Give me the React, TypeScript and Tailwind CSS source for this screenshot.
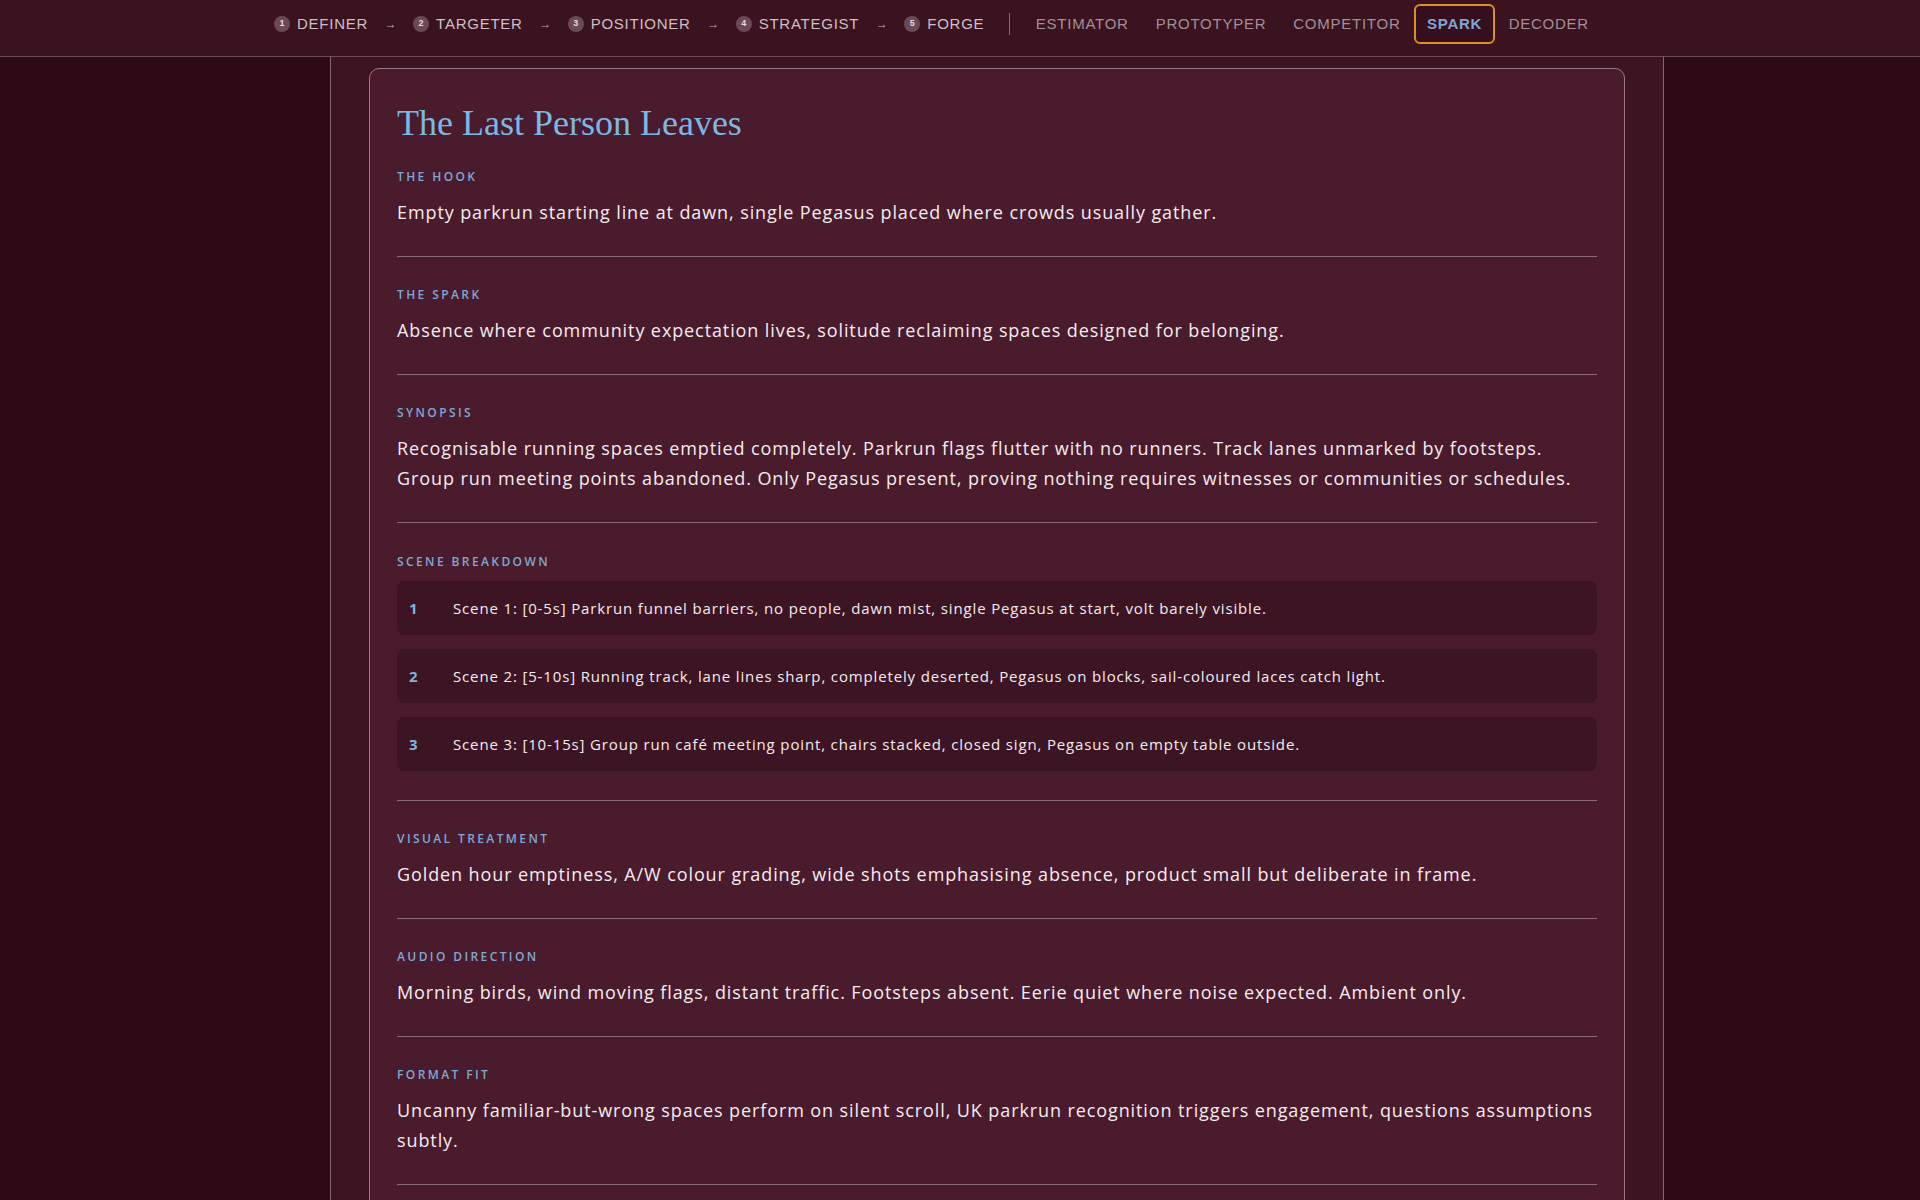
import React from "react";

const steps = [
  { n: "1", label: "DEFINER" },
  { n: "2", label: "TARGETER" },
  { n: "3", label: "POSITIONER" },
  { n: "4", label: "STRATEGIST" },
  { n: "5", label: "FORGE" },
];

const tools = ["ESTIMATOR", "PROTOTYPER", "COMPETITOR", "SPARK", "DECODER"];

const scenes = [
  "Scene 1: [0-5s] Parkrun funnel barriers, no people, dawn mist, single Pegasus at start, volt barely visible.",
  "Scene 2: [5-10s] Running track, lane lines sharp, completely deserted, Pegasus on blocks, sail-coloured laces catch light.",
  "Scene 3: [10-15s] Group run café meeting point, chairs stacked, closed sign, Pegasus on empty table outside.",
];

const bodyFont = { fontFamily: '"Open Sans", "Noto Sans", sans-serif' };

function Label({ children }: { children: React.ReactNode }) {
  return (
    <div className="text-[12px] leading-[16px] font-semibold tracking-[0.2em] text-[#7fa8d2]">
      {children}
    </div>
  );
}

function Section({
  label,
  children,
  first,
}: {
  label: string;
  children: React.ReactNode;
  first?: boolean;
}) {
  return (
    <div
      className={`${first ? "pt-0" : "pt-[30px]"} pb-[29px] border-b border-[#8d6a7a]`}
    >
      <Label>{label}</Label>
      <div className="mt-[12px]">{children}</div>
    </div>
  );
}

function Text({ children }: { children: React.ReactNode }) {
  return (
    <p className="text-[18px] leading-[30px] tracking-[0.9px] text-[#f5ecef]">{children}</p>
  );
}

export default function App() {
  return (
    <div className="min-h-screen w-full bg-[#2d0a15] flex flex-col" style={bodyFont}>
      {/* Nav */}
      <nav
        className="h-[57px] shrink-0 bg-[#3b1320] border-b border-[#6f4b5a] flex items-start pt-[4px]"
        style={{ fontFamily: '"Liberation Sans", Arial, sans-serif' }}
      >
        <div className="ml-[274px] flex items-center h-[40px]">
          {steps.map((s, i) => (
            <React.Fragment key={s.n}>
              <div className="flex items-center gap-[7px]">
                <span className="w-[16px] h-[16px] rounded-full bg-[#6a4a56] text-[#e6d8dc] text-[9px] font-bold flex items-center justify-center">
                  {s.n}
                </span>
                <span className="text-[15px] tracking-[0.05em] text-[#cdbfc4]">
                  {s.label}
                </span>
              </div>
              {i < steps.length - 1 && (
                <span className="mx-[16.5px] text-[12px] text-[#bfaeb4]">→</span>
              )}
            </React.Fragment>
          ))}
          <span className="ml-[25px] mr-[12px] w-px h-[22px] bg-[#8a6a76]" />
          {tools.map((t) =>
            t === "SPARK" ? (
              <span
                key={t}
                className="h-[40px] px-[11px] flex items-center rounded-[6px] border-2 border-[#d9921c] bg-[#35101c] text-[15px] font-bold tracking-[0.05em] text-[#7fa6d0]"
              >
                {t}
              </span>
            ) : (
              <span
                key={t}
                className="h-[40px] px-[11.5px] flex items-center border-2 border-transparent text-[15px] tracking-[0.05em] text-[#a38f97]"
              >
                {t}
              </span>
            )
          )}
        </div>
      </nav>

      {/* Body */}
      <div className="flex-1 flex">
        <div className="ml-[330px] w-[1334px] bg-[#3d1422] border-x border-[#8a6575] px-[38px] pt-[11px]">
          <div className="bg-[#4a1b2d] border border-[#9c7887] rounded-[10px] px-[27px] pt-[32px] pb-[28px]">
            <h1
              className="text-[36px] leading-[44px] text-[#7cb9e2] mb-[24px]"
              style={{ fontFamily: '"Liberation Serif", "Times New Roman", serif' }}
            >
              The Last Person Leaves
            </h1>

            <Section label="THE HOOK" first>
              <Text>
                Empty parkrun starting line at dawn, single Pegasus placed where crowds usually gather.
              </Text>
            </Section>

            <Section label="THE SPARK">
              <Text>
                Absence where community expectation lives, solitude reclaiming spaces designed for belonging.
              </Text>
            </Section>

            <Section label="SYNOPSIS">
              <Text>
                Recognisable running spaces emptied completely. Parkrun flags flutter with no runners. Track lanes unmarked by footsteps. Group run meeting points abandoned. Only Pegasus present, proving nothing requires witnesses or communities or schedules.
              </Text>
            </Section>

            <div className="pt-[31px] pb-[29px] border-b border-[#8d6a7a]">
              <Label>SCENE BREAKDOWN</Label>
              <div className="mt-[11px] flex flex-col gap-[14px]">
                {scenes.map((s, i) => (
                  <div
                    key={i}
                    className="h-[54px] rounded-[8px] bg-[#3c1423] flex items-center pl-[12px] pr-4"
                  >
                    <span className="w-[44px] shrink-0 text-[15px] font-bold text-[#7fb3e0]">
                      {i + 1}
                    </span>
                    <span className="text-[15px] leading-[22px] tracking-[0.85px] text-[#f5ecef]">{s}</span>
                  </div>
                ))}
              </div>
            </div>

            <Section label="VISUAL TREATMENT">
              <Text>
                Golden hour emptiness, A/W colour grading, wide shots emphasising absence, product small but deliberate in frame.
              </Text>
            </Section>

            <Section label="AUDIO DIRECTION">
              <Text>
                Morning birds, wind moving flags, distant traffic. Footsteps absent. Eerie quiet where noise expected. Ambient only.
              </Text>
            </Section>

            <Section label="FORMAT FIT">
              <Text>
                Uncanny familiar-but-wrong spaces perform on silent scroll, UK parkrun recognition triggers engagement, questions assumptions subtly.
              </Text>
            </Section>
          </div>
        </div>
      </div>
    </div>
  );
}
